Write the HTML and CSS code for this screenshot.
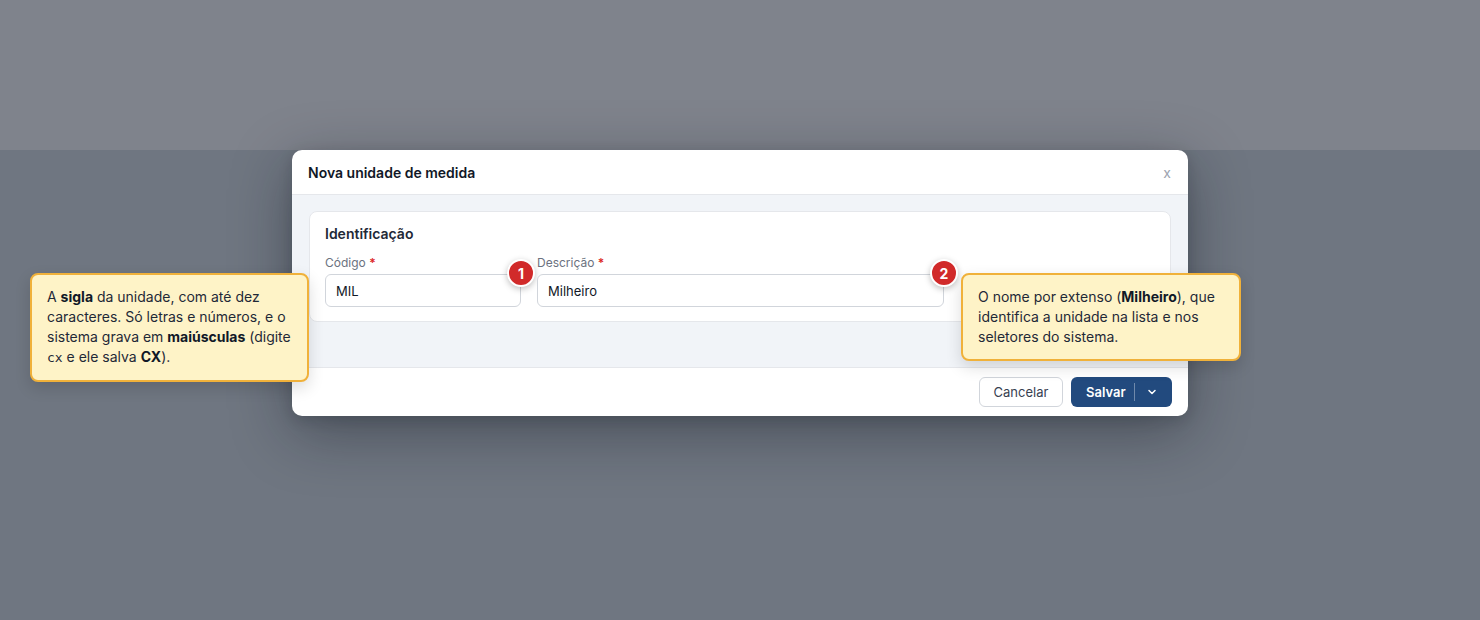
FILE: index.html
```html
<!DOCTYPE html>
<html lang="pt-BR">
<head>
    <meta charset="UTF-8">
    <meta name="viewport" content="width=device-width, initial-scale=1.0">
    <title>Nova unidade de medida</title>
    <link rel="stylesheet" href="styles.css">
</head>
<body>
    <div class="page-top"></div>

    <div class="modal">
        <div class="modal-header">
            <h1>Nova unidade de medida</h1>
            <span class="close">x</span>
        </div>

        <div class="modal-body">
            <section class="card">
                <h2>Identificação</h2>
                <div class="fields">
                    <div class="field">
                        <label>Código <span class="req">*</span></label>
                        <div class="input-wrap">
                            <input type="text" value="MIL">
                            <span class="badge">1</span>
                        </div>
                    </div>
                    <div class="field">
                        <label>Descrição <span class="req">*</span></label>
                        <div class="input-wrap">
                            <input type="text" value="Milheiro">
                            <span class="badge">2</span>
                        </div>
                    </div>
                </div>
            </section>
        </div>

        <div class="modal-footer">
            <button class="btn btn-outline">Cancelar</button>
            <button class="btn btn-primary">
                <span class="btn-label">Salvar</span>
                <span class="btn-split">
                    <svg width="14" height="14" viewBox="0 0 14 14"><path d="M4 5.5 7 8.5l3-3" fill="none" stroke="#fff" stroke-width="1.5" stroke-linecap="round" stroke-linejoin="round"/></svg>
                </span>
            </button>
        </div>
    </div>

    <div class="tip tip-left">
        A <b>sigla</b> da unidade, com até dez caracteres. Só letras e números, e o sistema grava em <b>maiúsculas</b> (digite <code>cx</code> e ele salva <b>CX</b>).
    </div>

    <div class="tip tip-right">
        O nome por extenso (<b>Milheiro</b>), que identifica a unidade na lista e nos seletores do sistema.
    </div>
</body>
</html>
```

FILE: styles.css
```css
* {
    margin: 0;
    padding: 0;
    box-sizing: border-box;
    font-family: 'Inter', 'Liberation Sans', sans-serif;
}

body {
    position: relative;
    height: 620px;
    overflow: hidden;
    background-color: #6f7681;
    color: #1f2937;
}

.page-top {
    height: 150px;
    background-color: #7f838c;
}

/* Modal */
.modal {
    width: 896px;
    margin: 0 auto;
    background-color: white;
    border-radius: 10px;
    box-shadow: 0 16px 60px rgba(15, 20, 30, 0.4), 0 4px 14px rgba(15, 20, 30, 0.15);
    overflow: hidden;
}

.modal-header {
    height: 45px;
    display: flex;
    align-items: center;
    justify-content: space-between;
    padding: 0 16px;
    border-bottom: 1px solid #e5e7eb;
}

.modal-header h1 {
    font-size: 14px;
    font-weight: 600;
    color: #111827;
}

.close {
    font-size: 14px;
    color: #9ca3af;
    margin-right: 1px;
    margin-top: 1px;
}

.modal-body {
    background-color: #f1f4f8;
    padding: 16px 17px 45px;
}

.card {
    background-color: white;
    border: 1px solid #e5e7eb;
    border-radius: 8px;
    padding: 12px 15px 14px;
}

.card h2 {
    font-size: 14px;
    font-weight: 600;
    line-height: 20px;
    color: #1f2937;
    margin-bottom: 11px;
}

.fields {
    display: grid;
    grid-template-columns: 196px 407px;
    gap: 16px;
}

.field label {
    display: block;
    font-size: 12px;
    line-height: 16px;
    color: #6b7280;
    margin-bottom: 3px;
}

.req {
    color: #dc2626;
    font-weight: 600;
}

.input-wrap {
    position: relative;
}

.input-wrap input {
    width: 100%;
    height: 33px;
    border: 1px solid #d1d5db;
    border-radius: 6px;
    padding: 0 10px;
    font-size: 13px;
    color: #111827;
    background: white;
}

.badge {
    position: absolute;
    top: -15px;
    right: -14px;
    width: 28px;
    height: 28px;
    border-radius: 50%;
    background-color: #d12a2a;
    border: 2.5px solid white;
    box-shadow: 0 2px 6px rgba(0, 0, 0, 0.25);
    color: white;
    font-size: 14px;
    font-weight: 700;
    display: flex;
    align-items: center;
    justify-content: center;
}

/* Footer */
.modal-footer {
    display: flex;
    justify-content: flex-end;
    gap: 8px;
    padding: 9px 16px;
    border-top: 1px solid #e5e7eb;
}

.btn {
    height: 30px;
    border-radius: 6px;
    font-size: 13px;
    display: inline-flex;
    align-items: center;
}

.btn-outline {
    width: 84px;
    justify-content: center;
    background: white;
    border: 1px solid #d1d5db;
    color: #374151;
}

.btn-primary {
    width: 101px;
    background-color: #224a7e;
    border: none;
    color: white;
    font-weight: 600;
    padding: 0;
}

.btn-label {
    padding: 0 8px 0 15px;
}

.btn-split {
    display: flex;
    align-items: center;
    justify-content: center;
    height: 18px;
    flex: 1;
    padding-right: 2px;
    border-left: 1px solid rgba(255, 255, 255, 0.35);
}

/* Tooltips */
.tip {
    position: absolute;
    top: 273px;
    background-color: #fef3c7;
    border: 2px solid #f0b13a;
    border-radius: 8px;
    padding: 12px 13px 12px 15px;
    font-size: 14px;
    line-height: 20px;
    color: #1f2937;
    box-shadow: 0 6px 16px rgba(0, 0, 0, 0.14);
}

.tip b {
    font-weight: 700;
    color: #111827;
}

.tip code {
    font-family: 'DejaVu Sans Mono', monospace;
    font-size: 13px;
}

.tip-left {
    left: 30px;
    width: 279px;
}

.tip-right {
    left: 961px;
    width: 280px;
}
```
